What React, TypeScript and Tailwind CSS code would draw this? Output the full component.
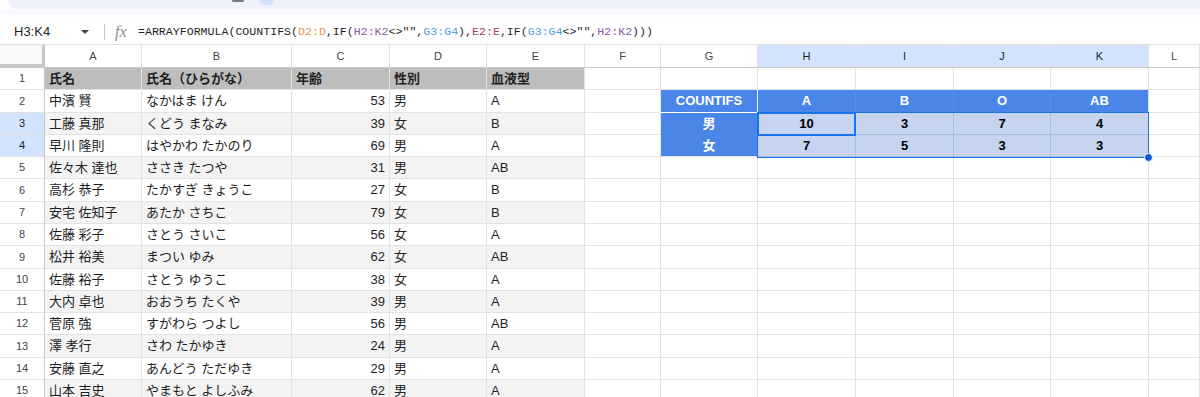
import React from 'react';

const FONT = "font-['Liberation_Sans','Noto_Sans_CJK_JP',sans-serif]";

const COLS = [
  { k: 'A', w: 'w-[97px]' },
  { k: 'B', w: 'w-[150px]' },
  { k: 'C', w: 'w-[98px]' },
  { k: 'D', w: 'w-[97px]' },
  { k: 'E', w: 'w-[98px]' },
  { k: 'F', w: 'w-[76px]' },
  { k: 'G', w: 'w-[97px]' },
  { k: 'H', w: 'w-[98px]' },
  { k: 'I', w: 'w-[98px]' },
  { k: 'J', w: 'w-[97px]' },
  { k: 'K', w: 'w-[98px]' },
  { k: 'L', w: 'flex-1' },
];

// heights of rows 1..15 (scaled screenshot, ~22.3px each)
const ROW_H = ['h-[22px]', 'h-[23px]', 'h-[22px]', 'h-[22px]', 'h-[22px]', 'h-[23px]', 'h-[22px]', 'h-[22px]', 'h-[23px]', 'h-[22px]', 'h-[22px]', 'h-[22px]', 'h-[23px]', 'h-[22px]', 'h-[22px]'];

const people = [
  ['氏名', '氏名（ひらがな）', '年齢', '性別', '血液型'],
  ['中濱 賢', 'なかはま けん', '53', '男', 'A'],
  ['工藤 真那', 'くどう まなみ', '39', '女', 'B'],
  ['早川 隆則', 'はやかわ たかのり', '69', '男', 'A'],
  ['佐々木 達也', 'ささき たつや', '31', '男', 'AB'],
  ['高杉 恭子', 'たかすぎ きょうこ', '27', '女', 'B'],
  ['安宅 佐知子', 'あたか さちこ', '79', '女', 'B'],
  ['佐藤 彩子', 'さとう さいこ', '56', '女', 'A'],
  ['松井 裕美', 'まつい ゆみ', '62', '女', 'AB'],
  ['佐藤 裕子', 'さとう ゆうこ', '38', '女', 'A'],
  ['大内 卓也', 'おおうち たくや', '39', '男', 'A'],
  ['菅原 強', 'すがわら つよし', '56', '男', 'AB'],
  ['澤 孝行', 'さわ たかゆき', '24', '男', 'A'],
  ['安藤 直之', 'あんどう ただゆき', '29', '男', 'A'],
  ['山本 吉史', 'やまもと よしふみ', '62', '男', 'A'],
];

const summary: Record<number, string[]> = {
  2: ['COUNTIFS', 'A', 'B', 'O', 'AB'],
  3: ['男', '10', '3', '7', '4'],
  4: ['女', '7', '5', '3', '3'],
};

function cellFor(row: number, col: number) {
  const base = 'border-r border-b border-[#e2e2e2]';
  if (col <= 4) {
    const text = people[row - 1][col];
    let bg = '';
    if (row === 1) bg = 'bg-[#bdbdbd] font-bold';
    else if (row % 2 === 1) bg = 'bg-[#f3f3f3]';
    const align = col === 2 && row > 1 ? 'justify-end pr-[4px]' : 'justify-start pl-[4px]';
    return { text, cls: `${base} ${bg} ${align}` };
  }
  if (col >= 6 && col <= 10 && summary[row]) {
    const text = summary[row][col - 6];
    if (row === 2) {
      const r = col === 6 ? 'border-r-white' : col === 10 ? 'border-r-[#e2e2e2]' : 'border-r-[#5690ea]';
      return { text, cls: `border-r border-b bg-[#4a86e8] text-white font-bold justify-center border-b-white ${r}` };
    }
    if (col === 6) {
      const b = row === 3 ? 'border-b-[#4a86e8]' : 'border-b-[#e2e2e2]';
      return { text, cls: `border-r border-b bg-[#4a86e8] text-white font-bold justify-center border-r-white ${b}` };
    }
    return { text, cls: 'border-r border-b border-[#a9bce4] bg-[#c6d4f0] text-black font-bold justify-center' };
  }
  return { text: '', cls: base };
}

function FormulaBar() {
  return (
    <div className="flex items-center h-[24px] bg-white">
      <div className={`${FONT} text-[13px] text-[#1f1f1f] pl-[14px] w-[80px]`}>H3:K4</div>
      <div className="w-[24px] flex items-center">
        <svg width="10" height="6" viewBox="0 0 10 6"><path d="M1 1 L5 5 L9 1 Z" fill="#444" /></svg>
      </div>
      <div className="w-px h-[16px] bg-[#c4c7c5]" />
      <div className="w-[33px] pl-[10px] font-['Liberation_Serif',serif] italic text-[16px] text-[#8a8a8a] leading-none">fx</div>
      <div className="font-['Liberation_Mono',monospace] text-[11.6px] text-[#1f1f1f] whitespace-pre">
        =ARRAYFORMULA(COUNTIFS(<span className="text-[#e8964a]">D2:D</span>,IF(<span className="text-[#8b5aa8]">H2:K2</span>{'<>"",'}<span className="text-[#4a9fd8]">G3:G4</span>),<span className="text-[#a0455f]">E2:E</span>,IF(<span className="text-[#4a9fd8]">G3:G4</span>{'<>"",'}<span className="text-[#8b5aa8]">H2:K2</span>)))
      </div>
    </div>
  );
}

export default function App() {
  return (
    <div className={`relative w-[1200px] h-[397px] overflow-hidden bg-white ${FONT}`}>
      {/* top strip */}
      <div className="relative h-[9px] ml-[8px] bg-[#edf2fa] rounded-bl-[12px]">
        <div className="absolute left-[224px] bottom-[7px] w-[12px] h-[2px] bg-[#7a7a7a] rounded" />
        <div className="absolute left-[252px] top-0 w-[14px] h-[5px] bg-[#d3e3fd] rounded-b" />
      </div>
      <div className="h-[11px] bg-gradient-to-b from-[#f5f7fb] to-white" />
      <FormulaBar />

      {/* column headers */}
      <div className="flex h-[24px] border-t border-[#e1e1e1] bg-white">
        <div className="w-[45px] h-full bg-[#f8f9fa] border-r-[3px] border-b-[4px] border-[#c4c7c5]" />
        {COLS.map((c, i) => {
          const sel = i >= 7 && i <= 10;
          return (
            <div
              key={c.k}
              className={`${c.w} h-full flex items-center justify-center border-r border-b border-[#e1e1e1] border-b-[#c4c7c5] text-[11px] ${sel ? 'bg-[#d3e3fd] text-[#1f1f1f]' : 'bg-white text-[#444]'}`}
            >
              {c.k}
            </div>
          );
        })}
      </div>

      {/* rows */}
      {ROW_H.map((h, ri) => {
        const row = ri + 1;
        const sel = row === 3 || row === 4;
        return (
          <div key={row} className={`flex ${h}`}>
            <div
              className={`w-[45px] h-full flex items-center justify-center border-r border-b border-[#e1e1e1] border-r-[#c4c7c5] text-[11px] ${sel ? 'bg-[#d3e3fd] text-[#1f1f1f]' : 'bg-white text-[#444]'}`}
            >
              {row}
            </div>
            {COLS.map((c, ci) => {
              const { text, cls } = cellFor(row, ci);
              return (
                <div key={c.k} className={`${c.w} h-full flex items-center text-[13px] text-[#1f1f1f] whitespace-nowrap overflow-hidden ${cls}`}>
                  {text}
                </div>
              );
            })}
          </div>
        );
      })}

      {/* selection H3:K4 */}
      <div className="absolute left-[757px] top-[112px] w-[392px] h-[46px] border border-[#1a73e8] pointer-events-none" />
      <div className="absolute left-[757px] top-[112px] w-[99px] h-[24px] border-2 border-[#1a73e8] pointer-events-none" />
      <div className="absolute left-[1144px] top-[153px] w-[9px] h-[9px] rounded-full bg-[#0b57d0] border border-white" />
    </div>
  );
}
